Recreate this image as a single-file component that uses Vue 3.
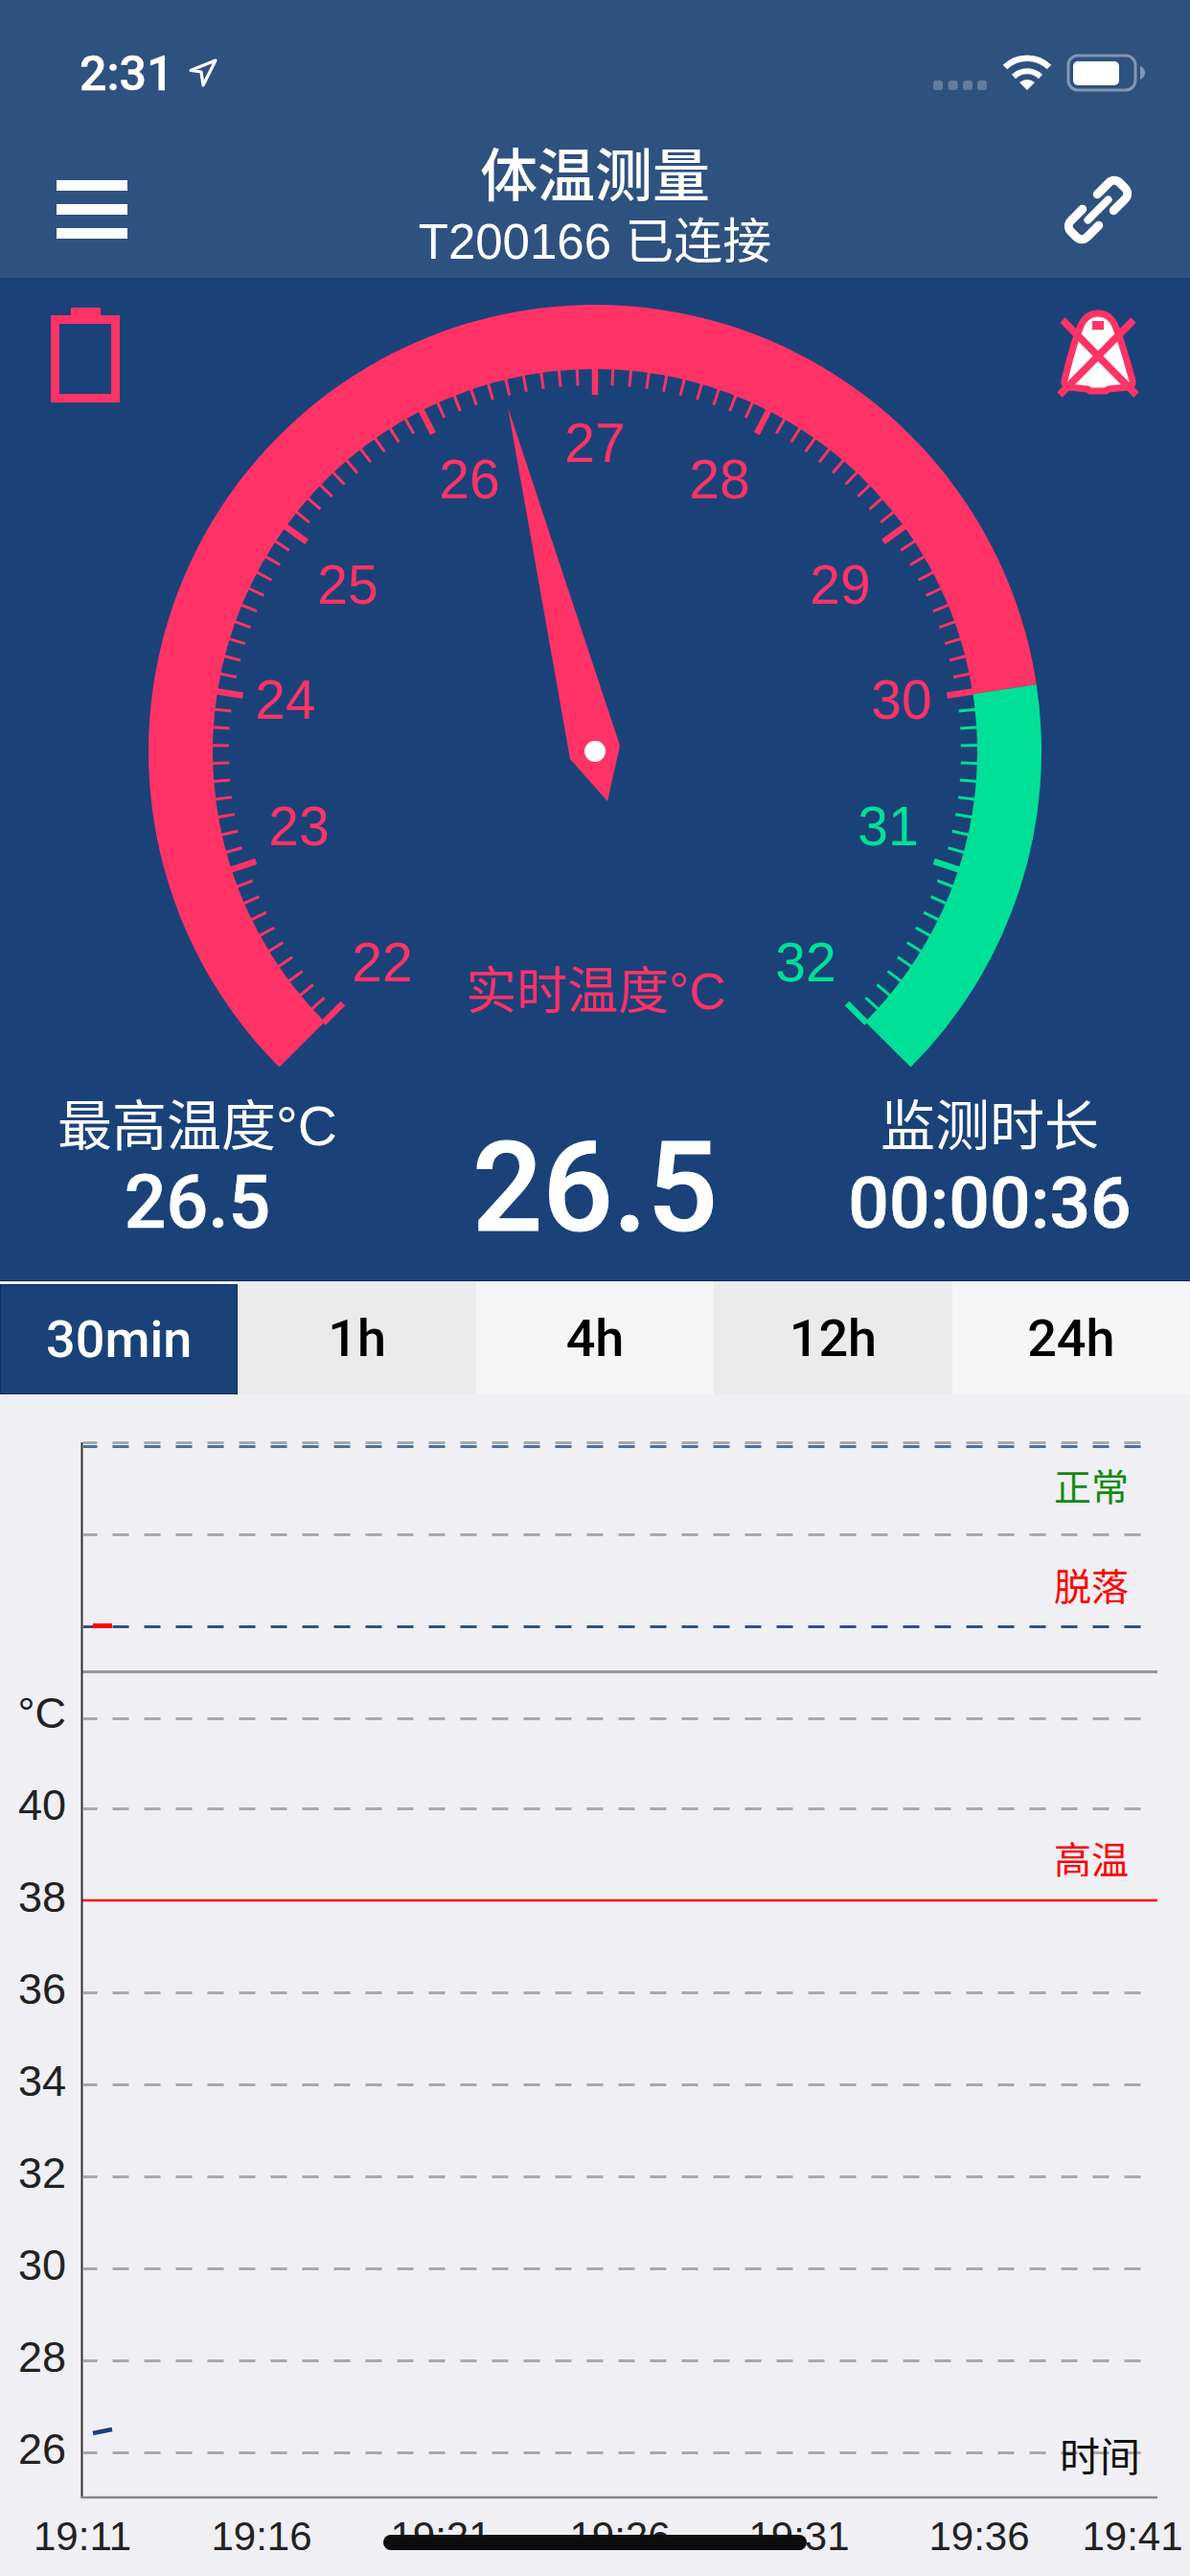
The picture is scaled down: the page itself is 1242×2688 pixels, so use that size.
<script setup>
const cx = 621
const cy = 784
const rOuter = 466
const rInner = 399

const polar = (deg, r) => {
  const a = (deg * Math.PI) / 180
  return [cx + r * Math.sin(a), cy - r * Math.cos(a)]
}
const arc = (from, to) => {
  const [x1, y1] = polar(from, rOuter)
  const [x2, y2] = polar(to, rOuter)
  const [x3, y3] = polar(to, rInner)
  const [x4, y4] = polar(from, rInner)
  const large = to - from > 180 ? 1 : 0
  return `M${x1} ${y1}A${rOuter} ${rOuter} 0 ${large} 1 ${x2} ${y2}L${x3} ${y3}A${rInner} ${rInner} 0 ${large} 0 ${x4} ${y4}Z`
}
const redArc = arc(-135, 81.4)
const greenArc = arc(81.4, 135)

const ticks = Array.from({ length: 101 }, (_, i) => {
  const deg = -135 + i * 2.7
  const major = i % 10 === 0
  const [x1, y1] = polar(deg, rInner + 2)
  const [x2, y2] = polar(deg, rInner - (major ? 27 : 17))
  return { i, x1, y1, x2, y2, w: major ? 6.5 : 3, c: i <= 80 ? '#ff3366' : '#00e096' }
})

const scale = [
  { t: '22', x: 399, y: 1024, c: '#ff3366' },
  { t: '23', x: 312, y: 882, c: '#ff3366' },
  { t: '24', x: 298, y: 750, c: '#ff3366' },
  { t: '25', x: 363, y: 630, c: '#ff3366' },
  { t: '26', x: 490, y: 520, c: '#ff3366' },
  { t: '27', x: 621, y: 482, c: '#ff3366' },
  { t: '28', x: 751, y: 520, c: '#ff3366' },
  { t: '29', x: 877, y: 630, c: '#ff3366' },
  { t: '30', x: 941, y: 750, c: '#ff3366' },
  { t: '31', x: 927, y: 882, c: '#00e096' },
  { t: '32', x: 841, y: 1024, c: '#00e096' }
]

const tabs = ['30min', '1h', '4h', '12h', '24h']

const gridY = [1505.5, 1601.5, 1793.5, 1887.5, 2079.5, 2175.5, 2271.5, 2367.5, 2463.5, 2559.5]
const yLabels = [
  { t: '40', y: 1899 },
  { t: '38', y: 1995 },
  { t: '36', y: 2091 },
  { t: '34', y: 2187 },
  { t: '32', y: 2283 },
  { t: '30', y: 2379 },
  { t: '28', y: 2475 },
  { t: '26', y: 2571 }
]
const xLabels = [
  { t: '19:11', x: 86 },
  { t: '19:16', x: 273 },
  { t: '19:21', x: 460 },
  { t: '19:26', x: 647 },
  { t: '19:31', x: 834 },
  { t: '19:36', x: 1022 },
  { t: '19:41', x: 1182 }
]
</script>

<template>
  <div class="screen">
    <header class="top">
      <div class="status">
        <div class="status-left">
          <span class="clock">2:31</span>
          <svg class="arrow" width="36" height="38" viewBox="192 57 36 38">
            <path d="M224 63 L198 73.5 L209 75 L211 89 Z" fill="none" stroke="#fff" stroke-width="3.2" stroke-linejoin="round" />
          </svg>
        </div>
        <svg class="status-right" width="230" height="44" viewBox="970 54 230 44">
          <rect x="974" y="84" width="10" height="10" rx="3" fill="#fff" opacity=".25" />
          <rect x="989.5" y="84" width="10" height="10" rx="3" fill="#fff" opacity=".25" />
          <rect x="1005" y="84" width="10" height="10" rx="3" fill="#fff" opacity=".25" />
          <rect x="1020" y="84" width="10" height="10" rx="3" fill="#fff" opacity=".25" />
          <path d="M1049 70 A33 33 0 0 1 1095 70" fill="none" stroke="#fff" stroke-width="6.5" />
          <path d="M1058 80 A20 20 0 0 1 1086 80" fill="none" stroke="#fff" stroke-width="6" />
          <path d="M1072 94 L1064 86 Q1072 80 1080 86 Z" fill="#fff" />
          <rect x="1115" y="58" width="70" height="36" rx="10" fill="none" stroke="#fff" stroke-opacity=".4" stroke-width="3" />
          <rect x="1120" y="64" width="48" height="25" rx="5" fill="#fff" />
          <path d="M1190 69 Q1195 71 1195 76 Q1195 81 1190 83 Z" fill="#fff" opacity=".4" />
        </svg>
      </div>
      <div class="nav">
        <div class="menu"><i></i><i></i><i></i></div>
        <div class="titles">
          <div class="title">体温测量</div>
          <div class="subtitle">T200166 已连接</div>
        </div>
        <svg class="link" width="84" height="84" viewBox="-42 -42 84 84">
          <g transform="rotate(-45)" fill="none" stroke="#fff" stroke-width="9" stroke-linecap="round">
            <path d="M11 -12 H28 a8 8 0 0 1 8 8 V4 a8 8 0 0 1 -8 8 H11" />
            <path d="M-11 -12 H-28 a8 8 0 0 0 -8 8 V4 a8 8 0 0 0 8 8 H-11" />
            <path d="M-15 0 H15" stroke-width="8" />
          </g>
        </svg>
      </div>
    </header>

    <section class="panel">
      <svg class="gauge" width="1242" height="840" viewBox="0 292 1242 840">
        <path :d="redArc" fill="#ff3366" />
        <path :d="greenArc" fill="#00e096" />
        <line
          v-for="k in ticks"
          :key="k.i"
          :x1="k.x1"
          :y1="k.y1"
          :x2="k.x2"
          :y2="k.y2"
          :stroke="k.c"
          :stroke-width="k.w"
        />
        <text
          v-for="s in scale"
          :key="s.t"
          class="scale"
          :x="s.x"
          :y="s.y"
          :fill="s.c"
          text-anchor="middle"
        >{{ s.t }}</text>
        <text class="live" x="622" y="1053" text-anchor="middle">实时温度°C</text>
        <path d="M530 425 L647 778 L634 836 L595 792 Z" fill="#ff3366" />
        <circle cx="621" cy="784" r="11" fill="#fff" />

        <rect x="74" y="321" width="31" height="10" fill="#ff3366" />
        <rect x="57.5" y="333.5" width="63" height="82" fill="none" stroke="#ff3366" stroke-width="9" />

        <path
          d="M1146 327 C1136 327 1131 333 1128 340 C1122 354 1116 376 1111 397 Q1110 403 1116 404 L1135 406 L1138 408 L1154 408 L1157 406 L1177 404 Q1183 403 1182 397 C1176 376 1170 354 1164 340 C1161 333 1156 327 1146 327 Z"
          fill="#fff"
          stroke="#ff3366"
          stroke-width="7"
          stroke-linejoin="round"
        />
        <rect x="1140" y="335" width="12" height="9" fill="#ff3366" />
        <path d="M1109 334 L1186 412 M1183 334 L1106 412" stroke="#ff3366" stroke-width="7.5" fill="none" />
      </svg>

      <div class="stats">
        <div class="stat">
          <div class="stat-label">最高温度°C</div>
          <div class="stat-value">26.5</div>
        </div>
        <div class="stat stat-main">26.5</div>
        <div class="stat">
          <div class="stat-label">监测时长</div>
          <div class="stat-value stat-time">00:00:36</div>
        </div>
      </div>
    </section>

    <nav class="tabs">
      <div v-for="(t, i) in tabs" :key="t" class="tab" :class="{ active: i === 0, odd: i % 2 === 1 }">{{ t }}</div>
    </nav>

    <section class="chart">
      <svg width="1242" height="1233" viewBox="0 1455 1242 1233">
        <line
          v-for="y in gridY"
          :key="y"
          x1="87"
          :y1="y"
          x2="1197"
          :y2="y"
          stroke="#a9a9a9"
          stroke-width="3"
          stroke-dasharray="17 16"
          stroke-dashoffset="2.5"
        />
        <line x1="87" y1="1509.5" x2="1197" y2="1509.5" stroke="#4f6f9c" stroke-width="3" stroke-dasharray="17 16" stroke-dashoffset="2.5" />
        <line x1="87" y1="1697.5" x2="1197" y2="1697.5" stroke="#33527f" stroke-width="3" stroke-dasharray="17 16" stroke-dashoffset="2.5" />
        <line x1="86" y1="1744.5" x2="1208" y2="1744.5" stroke="#999" stroke-width="3" />
        <line x1="86" y1="1983" x2="1208" y2="1983" stroke="#f00" stroke-width="2.5" />
        <line x1="85.5" y1="1505" x2="85.5" y2="2607" stroke="#333" stroke-width="2" />
        <line x1="85" y1="2606" x2="1208" y2="2606" stroke="#888" stroke-width="2.5" />

        <rect x="97" y="1694" width="20" height="5" fill="#f00" />
        <line x1="97" y1="2539" x2="117" y2="2535" stroke="#1a3f80" stroke-width="4.5" />

        <text class="tag" x="1139" y="1566" fill="#118a11" text-anchor="middle">正常</text>
        <text class="tag" x="1139" y="1670" fill="#f00" text-anchor="middle">脱落</text>
        <text class="tag" x="1139" y="1955" fill="#f00" text-anchor="middle">高温</text>
        <text class="axis-time" x="1148" y="2579" text-anchor="middle">时间</text>

        <text class="axis-y" x="69" y="1803" text-anchor="end">°C</text>
        <text v-for="l in yLabels" :key="l.t" class="axis-y" x="69" :y="l.y" text-anchor="end">{{ l.t }}</text>
        <text v-for="l in xLabels" :key="l.t" class="axis-x" :x="l.x" y="2661" text-anchor="middle">{{ l.t }}</text>
      </svg>
      <div class="home"></div>
    </section>
  </div>
</template>

<style scoped>
.screen {
  position: relative;
  width: 1242px;
  height: 2688px;
  overflow: hidden;
  display: flex;
  flex-direction: column;
  background: #efeff4;
  font-family: "Liberation Sans", "Noto Sans CJK SC", sans-serif;
}
.top {
  height: 292px;
  flex: none;
  box-sizing: border-box;
  background: #2f5180;
  color: #fff;
  border-bottom: 2px solid #1f3f6e;
  display: flex;
  flex-direction: column;
}
.status {
  height: 132px;
  flex: none;
  display: flex;
  justify-content: space-between;
  padding: 54px 42px 0 83px;
  box-sizing: border-box;
}
.status-left {
  display: flex;
  align-items: flex-start;
  gap: 12px;
}
.clock {
  font-family: "Roboto", "Liberation Sans", sans-serif;
  font-size: 50px;
  font-weight: 500;
  line-height: 46px;
  -webkit-text-stroke: 0.5px #fff;
}
.arrow {
  margin-top: 3px;
}
.nav {
  flex: 1;
  position: relative;
  display: flex;
  align-items: flex-start;
  justify-content: center;
}
.menu {
  position: absolute;
  left: 59px;
  top: 56px;
  width: 74px;
  display: flex;
  flex-direction: column;
  gap: 14px;
}
.menu i {
  display: block;
  height: 11px;
  background: #fff;
}
.titles {
  text-align: center;
  padding-top: 16px;
}
.title {
  font-size: 60px;
  font-weight: 500;
  line-height: 74px;
}
.subtitle {
  font-size: 51px;
  line-height: 62px;
}
.link {
  position: absolute;
  right: 54px;
  top: 45px;
}
.panel {
  height: 1045px;
  flex: none;
  box-sizing: border-box;
  background: #1a4279;
  border-bottom: 1px solid #0b2a6b;
  display: flex;
  flex-direction: column;
}
.gauge {
  display: block;
  flex: none;
}
.scale {
  font-size: 57px;
}
.live {
  font-size: 53px;
  fill: #ff3366;
}
.stats {
  display: grid;
  grid-template-columns: 412px 418px 406px;
  color: #fff;
  padding-top: 11px;
}
.stat {
  text-align: center;
}
.stat-label {
  font-size: 57px;
  line-height: 64px;
}
.stat-value {
  font-family: "Roboto", "Liberation Sans", sans-serif;
  font-size: 77px;
  font-weight: 500;
  line-height: 84px;
  padding-top: 6px;
  -webkit-text-stroke: 0.6px #fff;
}
.stat-time {
  font-size: 75px;
}
.stat-main {
  font-family: "Roboto", "Liberation Sans", sans-serif;
  font-size: 129px;
  font-weight: 500;
  line-height: 140px;
  padding-top: 27px;
  -webkit-text-stroke: 1.2px #fff;
}
.tabs {
  flex: none;
  height: 118px;
  background: #f5f5f5;
  display: flex;
}
.tab {
  flex: 1;
  display: flex;
  align-items: center;
  justify-content: center;
  background: #f5f5f5;
  color: #000;
  font-family: "Roboto", "Liberation Sans", sans-serif;
  font-size: 54px;
  font-weight: 500;
}
.tab.odd {
  background: #ebebeb;
}
.tab.active {
  margin-top: 3px;
  background: #1a4279;
  color: #fff;
  box-shadow: inset 0 0 0 1px #0b2a6b;
}
.chart {
  flex: 1;
  position: relative;
}
.chart svg {
  display: block;
}
.tag {
  font-size: 39px;
}
.axis-time {
  font-size: 42px;
  fill: #111;
}
.axis-y {
  font-size: 45px;
  fill: #222;
}
.axis-x {
  font-size: 42px;
  fill: #222;
}
.home {
  position: absolute;
  left: 400px;
  bottom: 27px;
  width: 442px;
  height: 16px;
  border-radius: 8px;
  background: #0d0d0d;
}
</style>
